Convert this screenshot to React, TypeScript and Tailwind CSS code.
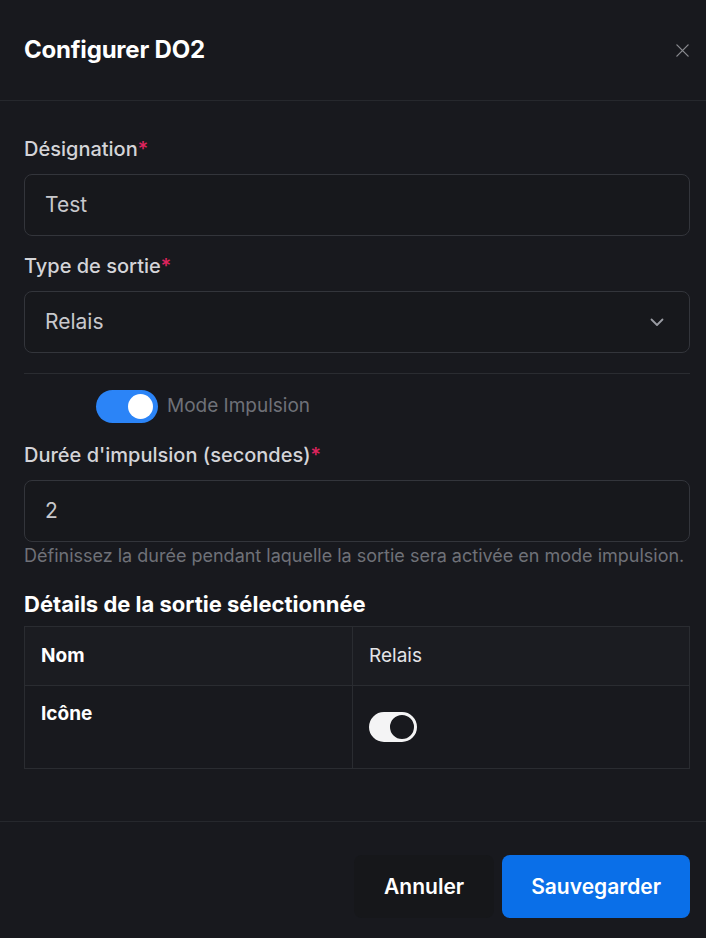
import { BsToggleOn } from "react-icons/bs";

function Label({ text }: { text: string }) {
  return (
    <label className="block text-[20px] leading-[28px] font-medium text-[#d4d4d8] mb-[11px]">
      {text}
      <span className="text-[#e0245e]">*</span>
    </label>
  );
}

export default function App() {
  return (
    <div
      className="w-[706px] h-[938px] bg-[#18191e] text-white overflow-hidden flex flex-col"
      style={{ fontFamily: "Inter, 'Noto Sans', sans-serif" }}
    >
      <div className="h-[101px] pl-6 pr-4 flex items-center justify-between border-b border-[#26282d] shrink-0">
        <h1 className="text-[24px] font-bold tracking-[-0.2px] text-white">Configurer DO2</h1>
        <button className="w-[15px] h-5 flex items-center justify-center text-[#8a8b90]">
          <svg width="15" height="15" viewBox="0 0 16 16" fill="none" stroke="currentColor" strokeWidth="1.4" strokeLinecap="round">
            <path d="M2 2L14 14M14 2L2 14" />
          </svg>
        </button>
      </div>

      <div className="pl-6 pr-4 pt-[34px] pb-[52px] border-b border-[#26282d]">
        <Label text="Désignation" />
        <div className="h-[62px] rounded-lg border border-[#33353b] bg-[#17181c] flex items-center px-5 text-[21px] text-[#c8c8cc]">
          Test
        </div>

        <div className="mt-4">
          <Label text="Type de sortie" />
          <div className="h-[62px] rounded-lg border border-[#33353b] bg-[#17181c] flex items-center justify-between pl-5 pr-[24px] text-[21px] text-[#c8c8cc]">
            <span>Relais</span>
            <svg width="16" height="16" viewBox="0 0 16 16" fill="none" stroke="#9a9ca3" strokeWidth="1.8" strokeLinecap="round" strokeLinejoin="round">
              <path d="M2.5 5.5L8 11l5.5-5.5" />
            </svg>
          </div>
        </div>

        <div className="mt-5 border-t border-[#2a2c31]" />

        <div className="mt-4 flex items-center gap-[9px] pl-[72px] h-[33px]">
          <div className="w-[62px] h-[33px] rounded-full bg-[#2b84f7] flex items-center justify-end pr-[5px]">
            <div className="w-[25px] h-[25px] rounded-full bg-white" />
          </div>
          <span className="text-[19px] text-[#6f7178]">Mode Impulsion</span>
        </div>

        <div className="mt-[18px]">
          <Label text="Durée d'impulsion (secondes)" />
          <div className="h-[62px] rounded-lg border border-[#33353b] bg-[#17181c] flex items-center px-5 text-[21px] text-[#c8c8cc]">
            2
          </div>
          <p className="mt-[2px] text-[18px] leading-[24px] text-[#6f7178] whitespace-nowrap">
            Définissez la durée pendant laquelle la sortie sera activée en mode impulsion.
          </p>
        </div>

        <h2 className="mt-[22px] text-[22px] leading-[28px] font-bold text-white">
          Détails de la sortie sélectionnée
        </h2>
        <table className="mt-2 w-full border-collapse text-[19px]">
          <tbody>
            <tr className="bg-[#1b1c21]">
              <td className="w-[328px] h-[59px] border border-[#2a2c31] px-4 font-bold text-white">Nom</td>
              <td className="border border-[#2a2c31] px-4 text-[#e4e4e7]">Relais</td>
            </tr>
            <tr>
              <td className="border border-[#2a2c31] px-4 py-4 align-top font-bold text-white leading-[24px]">Icône</td>
              <td className="border border-[#2a2c31] px-4 py-4">
                <div className="h-[50px] flex items-center">
                  <BsToggleOn size={48} color="#f4f4f5" />
                </div>
              </td>
            </tr>
          </tbody>
        </table>
      </div>

      <div className="px-[16px] pt-[33px] flex justify-end gap-2">
        <button className="h-[63px] px-[30px] rounded-lg bg-[#16171a] text-[21px] font-semibold text-white">
          Annuler
        </button>
        <button className="h-[63px] px-[29px] rounded-lg bg-[#0a6fe8] text-[21px] font-semibold text-white">
          Sauvegarder
        </button>
      </div>
    </div>
  );
}
